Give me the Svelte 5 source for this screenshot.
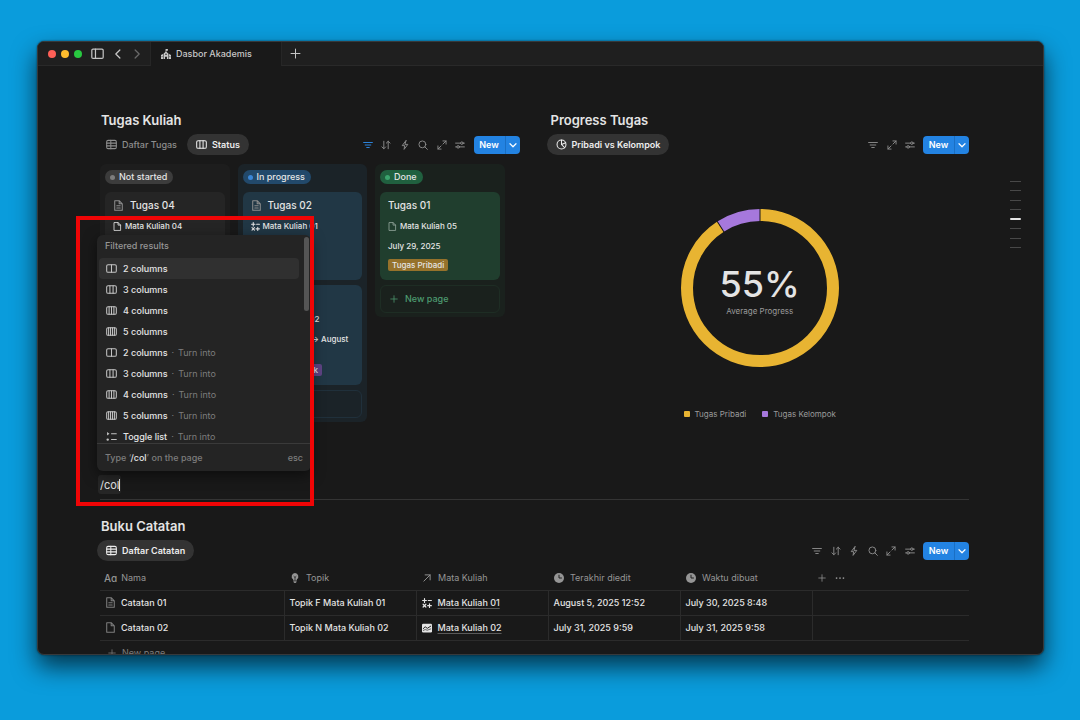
<script lang="ts">
  type Card = {
    title: string;
    icon?: boolean;
    course: string;
    courseIcon: string;
    date?: string;
    tag?: string;
    tagColor?: string;
  };

  const columns: { name: string; tone: string; cards: Card[] }[] = [
    {
      name: 'Not started',
      tone: 'gray',
      cards: [{ title: 'Tugas 04', icon: true, course: 'Mata Kuliah 04', courseIcon: 'page' }],
    },
    {
      name: 'In progress',
      tone: 'blue',
      cards: [
        {
          title: 'Tugas 02',
          icon: true,
          course: 'Mata Kuliah 01',
          courseIcon: 'math',
          date: 'August 5, 2025',
          tag: 'Tugas Pribadi',
          tagColor: 'yellow',
        },
        {
          title: 'Tugas 03',
          icon: true,
          course: 'Mata Kuliah 02',
          courseIcon: 'chart',
          date: 'August 5, 2025 → August 10,\u00a02025',
          tag: 'Tugas Kelompok',
          tagColor: 'purple',
        },
      ],
    },
    {
      name: 'Done',
      tone: 'green',
      cards: [
        {
          title: 'Tugas 01',
          course: 'Mata Kuliah 05',
          courseIcon: 'page',
          date: 'July 29, 2025',
          tag: 'Tugas Pribadi',
          tagColor: 'yellow',
        },
      ],
    },
  ];

  const menu = [
    { label: '2 columns', icon: 'cols2' },
    { label: '3 columns', icon: 'cols3' },
    { label: '4 columns', icon: 'cols4' },
    { label: '5 columns', icon: 'cols5' },
    { label: '2 columns', icon: 'cols2', hint: 'Turn into' },
    { label: '3 columns', icon: 'cols3', hint: 'Turn into' },
    { label: '4 columns', icon: 'cols4', hint: 'Turn into' },
    { label: '5 columns', icon: 'cols5', hint: 'Turn into' },
    { label: 'Toggle list', icon: 'toggle', hint: 'Turn into' },
  ];

  const notes = [
    {
      name: 'Catatan 01',
      icon: 'doc',
      topic: 'Topik F Mata Kuliah 01',
      course: 'Mata Kuliah 01',
      courseIcon: 'math',
      edited: 'August 5, 2025 12:52',
      created: 'July 30, 2025 8:48',
    },
    {
      name: 'Catatan 02',
      icon: 'page',
      topic: 'Topik N Mata Kuliah 02',
      course: 'Mata Kuliah 02',
      courseIcon: 'chart',
      edited: 'July 31, 2025 9:59',
      created: 'July 31, 2025 9:58',
    },
  ];

  const fullTools = ['filter', 'sort', 'bolt', 'search', 'expand', 'sliders'];
  const chartTools = ['filter', 'expand', 'sliders'];

  let query = $state('/col');
  let selected = $state(0);
</script>

{#snippet icon(name: string, size: number = 10)}
  <svg
    class="icon"
    width={size}
    height={size}
    viewBox="0 0 16 16"
    fill="none"
    stroke="currentColor"
    stroke-width="1.5"
    stroke-linecap="round"
    stroke-linejoin="round"
    aria-hidden="true"
  >
    {#if name === 'filter'}
      <path d="M1 4h14M3.500 8h9M6 12h4" />
    {:else if name === 'sort'}
      <path d="M4.500 2v12M1.500 11l3 3 3-3M11.500 14V2M8.500 5l3-3 3 3" />
    {:else if name === 'bolt'}
      <path d="M9.500 1 3.500 9h4L6.500 15l6-8h-4z" />
    {:else if name === 'search'}
      <circle cx="7" cy="7" r="5.500" /><path d="m11 11 4 4" />
    {:else if name === 'expand'}
      <path d="M9.500 1.500h5v5M14.500 1.500l-5 5M6.500 14.500h-5v-5M1.500 14.500l5-5" />
    {:else if name === 'sliders'}
      <path d="M1 5h8M13 5h2M1 11h2M7 11h8" /><circle cx="11" cy="5" r="2" /><circle cx="5" cy="11" r="2" />
    {:else if name === 'table'}
      <rect x="1" y="2" width="14" height="12" rx="2" /><path d="M1 6h14M1 10h14M7 2v12" />
    {:else if name === 'cols2'}
      <rect x="1" y="2.500" width="14" height="11" rx="2" /><path d="M8 2.500v11" />
    {:else if name === 'cols3'}
      <rect x="1" y="2.500" width="14" height="11" rx="2" /><path d="M5.700 2.500v11M10.300 2.500v11" />
    {:else if name === 'cols4'}
      <rect x="1" y="2.500" width="14" height="11" rx="2" /><path d="M4.500 2.500v11M8 2.500v11M11.500 2.500v11" />
    {:else if name === 'cols5'}
      <rect x="1" y="2.500" width="14" height="11" rx="2" />
      <path d="M3.800 2.500v11M6.600 2.500v11M9.400 2.500v11M12.200 2.500v11" />
    {:else if name === 'toggle'}
      <path d="M8 4h7M8 12.500h7" />
      <path d="M1.500 1.500v5L5 4z" fill="currentColor" stroke="none" />
      <circle cx="2.500" cy="12.500" r="1.700" fill="currentColor" stroke="none" />
    {:else if name === 'page'}
      <path d="M2.500 1h6.500l4.500 4.500V15h-11zM9 1v4.500h4.500" />
    {:else if name === 'doc'}
      <path d="M2.500 1h6.500l4.500 4.500V15h-11zM9 1v4.500h4.500M5.500 8.500h5M5.500 11.500h5" />
    {:else if name === 'math'}
      <path stroke-width="1.900" d="M1 4h6M4 1v6M10 4h5M1.800 10l4.400 4.400M6.200 10l-4.400 4.400M9 12.200h6M12 9.200v6" />
    {:else if name === 'chart'}
      <rect x="0" y="1" width="16" height="14" rx="2" fill="currentColor" stroke="none" />
      <path stroke="#191919" d="m2 9 3-3 3.500 2.500L14 5" />
      <path stroke="#191919" stroke-width="1" d="m2 12 3-1.500 3.500 1L14 9.500" />
    {:else if name === 'pie'}
      <circle cx="8" cy="8" r="6.500" /><path d="M8 1.500V8l4.500 4.500M8 8l6-2.500" />
    {:else if name === 'bulb'}
      <path
        d="M8 0a5.500 5.500 0 0 0-3 10v2h6v-2a5.500 5.500 0 0 0-3-10zM5.500 13h5v1.500L9 16H7l-1.500-1.500z"
        fill="currentColor"
        stroke="none"
      />
      <path stroke="#191919" stroke-width="1.200" d="M8 11V7M6.300 5.500 8 7l1.700-1.500" />
    {:else if name === 'arrow'}
      <path d="M3 13 13 3M5 3h8v8" />
    {:else if name === 'clock'}
      <circle cx="8" cy="8" r="8" fill="currentColor" stroke="none" /><path stroke="#191919" d="M8 3.500V8h4" />
    {:else if name === 'plus'}
      <path d="M8 1.500v13M1.500 8h13" />
    {:else if name === 'dots'}
      <g fill="currentColor" stroke="none">
        <circle cx="2.500" cy="8" r="1.400" /><circle cx="8" cy="8" r="1.400" /><circle cx="13.500" cy="8" r="1.400" />
      </g>
    {:else if name === 'down'}
      <path stroke-width="2.400" d="m2 5.500 6 6 6-6" />
    {:else if name === 'left'}
      <path stroke-width="2" d="M11 1.500 4.500 8l6.500 6.500" />
    {:else if name === 'right'}
      <path stroke-width="2" d="M5 1.500 11.500 8 5 14.500" />
    {:else if name === 'sidebar'}
      <rect x="1" y="2.500" width="14" height="11.500" rx="1.500" /><path d="M5.500 2.500v11.500" />
    {:else if name === 'school'}
      <g fill="currentColor" fill-rule="evenodd" stroke="none">
        <path d="M7.300 0H11v2.800H8.600v1.700L12 7.500V16H9.500v-3.500h-3V16H4V7.500l3.300-3zM8 7.200a1.200 1.200 0 1 0 0 2.400 1.200 1.200 0 0 0 0-2.400z" />
        <path d="M0 9.500 3.200 8v8H0zM1.200 11v2h1v-2zM16 9.500 12.800 8v8H16zM13.800 11v2h1v-2z" />
      </g>
    {/if}
  </svg>
{/snippet}

{#snippet toolbar(tools: string[], filtered: boolean = false)}
  <div class="toolbar">
    <div class="tools" class:short={tools.length < 4}>
      {#each tools as tool}
        <button class="tool" class:on={filtered && tool === 'filter'} aria-label={tool}>{@render icon(tool)}</button>
      {/each}
    </div>
    <div class="new">
      <button class="new-main">New</button>
      <button class="new-more" aria-label="More templates">{@render icon('down', 8)}</button>
    </div>
  </div>
{/snippet}

<div class="window">
  <header class="titlebar">
    <div class="controls">
      <div class="lights"><span class="red"></span><span class="amber"></span><span class="lime"></span></div>
      <button aria-label="Sidebar">{@render icon('sidebar', 13)}</button>
      <button aria-label="Back">{@render icon('left')}</button>
      <button class="dim" aria-label="Forward">{@render icon('right')}</button>
    </div>
    <div class="tab">{@render icon('school')}<span>Dasbor Akademis</span></div>
    <div class="tab-rest"><button aria-label="New tab">{@render icon('plus', 11)}</button></div>
  </header>

  <main class="page">
    <div class="split">
      <section>
        <h2>Tugas Kuliah</h2>
        <div class="bar">
          <div class="views">
            <button class="view">{@render icon('table', 11)}Daftar Tugas</button>
            <button class="view active">{@render icon('cols3', 11)}Status</button>
          </div>
          {@render toolbar(fullTools, true)}
        </div>
        <div class="board">
          {#each columns as column}
            <div class="column {column.tone}">
              <div class="status"><i></i>{column.name}</div>
              {#each column.cards as card}
                <article class="card">
                  <h3>
                    {#if card.icon}{@render icon('doc', 11)}{/if}{card.title}
                  </h3>
                  <p class="course">{@render icon(card.courseIcon, 9)}{card.course}</p>
                  {#if card.date}<p>{card.date}</p>{/if}
                  {#if card.tag}<span class="tag {card.tagColor}">{card.tag}</span>{/if}
                </article>
              {/each}
              <button class="add-card">{@render icon('plus', 8)}New page</button>
            </div>
          {/each}
        </div>
      </section>

      <section>
        <h2>Progress Tugas</h2>
        <div class="bar">
          <div class="views">
            <button class="view active">{@render icon('pie', 11)}Pribadi vs Kelompok</button>
          </div>
          {@render toolbar(chartTools)}
        </div>
        <div class="chart">
          <div class="donut">
            <svg viewBox="0 0 160 160" aria-hidden="true">
              <g fill="none" stroke-width="12" transform="rotate(-90 80 80)">
                <circle cx="80" cy="80" r="73" stroke="#e8b432" pathLength="110" stroke-dasharray="100 10" />
                <circle
                  cx="80"
                  cy="80"
                  r="73"
                  stroke="#a678dc"
                  pathLength="110"
                  stroke-dasharray="10 100"
                  stroke-dashoffset="-100"
                />
              </g>
              <g stroke="#191919" stroke-width="1">
                <path d="M80 0v14" />
                <path d="M80 0v14" transform="rotate(-32.700 80 80)" />
              </g>
            </svg>
            <div class="figure"><strong>55%</strong><span>Average Progress</span></div>
          </div>
          <ul class="legend">
            <li><i class="gold"></i>Tugas Pribadi</li>
            <li><i class="violet"></i>Tugas Kelompok</li>
          </ul>
        </div>
      </section>
    </div>

    <div class="editor">
      <label class="command">
        <input type="text" aria-label="Command" bind:value={query} /><span class="caret"></span>
      </label>
      <div class="popup">
        <div class="results">
          <div class="group">Filtered results</div>
          {#each menu as item, i}
            <button class="item" class:selected={i === selected} onclick={() => (selected = i)}>
              {@render icon(item.icon, 11)}<span>{item.label}</span>
              {#if item.hint}<small>·</small><small>{item.hint}</small>{/if}
            </button>
          {/each}
          <span class="thumb"></span>
        </div>
        <footer><span>Type ‘<b>/col</b>’ on the page</span><kbd>esc</kbd></footer>
      </div>
      <div class="highlight"></div>
    </div>
    <hr />

    <section class="notes">
      <h2>Buku Catatan</h2>
      <div class="bar">
        <div class="views">
          <button class="view active">{@render icon('table', 11)}Daftar Catatan</button>
        </div>
        {@render toolbar(fullTools)}
      </div>
      <table>
        <thead>
          <tr>
            <th class="name"><div><span class="aa">Aɑ</span>Nama</div></th>
            <th><div>{@render icon('bulb')}Topik</div></th>
            <th><div>{@render icon('arrow')}Mata Kuliah</div></th>
            <th><div>{@render icon('clock')}Terakhir diedit</div></th>
            <th><div>{@render icon('clock')}Waktu dibuat</div></th>
            <th class="extra"><div>{@render icon('plus', 8)}{@render icon('dots')}</div></th>
          </tr>
        </thead>
        <tbody>
          {#each notes as note}
            <tr>
              <td class="title"><div>{@render icon(note.icon, 11)}{note.name}</div></td>
              <td>{note.topic}</td>
              <td><div>{@render icon(note.courseIcon)}<a href="#course">{note.course}</a></div></td>
              <td>{note.edited}</td>
              <td>{note.created}</td>
              <td></td>
            </tr>
          {/each}
        </tbody>
      </table>
      <button class="add-row">{@render icon('plus', 8)}New page</button>
    </section>
  </main>

  <nav class="outline" aria-label="Outline">
    {#each Array(8) as _, i}
      <span class:current={i === 4}></span>
    {/each}
  </nav>
</div>

<style>
  :global(body) {
    background: #0a9cdc;
    overflow: hidden;
  }

  .window {
    position: relative;
    box-sizing: border-box;
    height: calc(100vh - 106px);
    margin: 41px 36px 65px 37px;
    overflow: hidden;
    border: 1px solid #36393b;
    border-radius: 7px;
    background: #191919;
    box-shadow:
      0 0 2px rgba(0, 0, 0, 0.6),
      0 12px 24px rgba(0, 0, 0, 0.65);
    color: #e4e4e4;
    font-family: Inter, 'Liberation Sans', sans-serif;
    font-size: 9px;
    font-weight: 500;
    line-height: 12px;
  }

  button,
  input {
    margin: 0;
    padding: 0;
    border: none;
    background: none;
    color: inherit;
    font: inherit;
  }

  button {
    display: flex;
    align-items: center;
    cursor: pointer;
    white-space: nowrap;
  }

  h2,
  h3,
  p,
  ul {
    margin: 0;
    padding: 0;
  }

  .icon {
    display: block;
    flex: none;
  }

  /* Title bar */
  .titlebar {
    display: flex;
    height: 24px;
  }

  .controls,
  .tab-rest {
    box-sizing: border-box;
    display: flex;
    align-items: center;
    border-bottom: 1px solid #292929;
    background: #1f1f1f;
    color: #c4c4c4;
  }

  .controls {
    width: 113px;
    gap: 9px;
    padding-left: 10px;
    border-right: 1px solid #262626;
  }

  .lights {
    display: flex;
    gap: 5px;
  }

  .lights span {
    width: 8px;
    height: 8px;
    border-radius: 50%;
  }

  .red {
    background: #fe5f57;
  }

  .amber {
    background: #febc2e;
  }

  .lime {
    background: #28c840;
  }

  .dim {
    color: #686868;
  }

  .tab {
    display: flex;
    align-items: center;
    gap: 5px;
    width: 120px;
    padding-left: 10px;
    color: #c8c8c8;
  }

  .tab-rest {
    flex: 1;
    padding-left: 8px;
    border-left: 1px solid #262626;
  }

  /* Page */
  .page {
    padding: 46px 74px 0 59px;
  }

  .split {
    display: grid;
    grid-template-columns: 1fr 1fr;
    gap: 27px;
  }

  h2 {
    padding-left: 4px;
    font-size: 13px;
    font-weight: 600;
    line-height: 16px;
  }

  .bar {
    display: flex;
    align-items: center;
    justify-content: space-between;
    height: 21px;
    margin-top: 6px;
  }

  .views {
    display: flex;
    gap: 1px;
  }

  .view {
    gap: 5px;
    height: 21px;
    padding: 0 9px;
    border-radius: 11px;
    color: #8d8d8d;
  }

  .view.active {
    background: #333;
    color: #ededed;
    font-weight: 600;
  }

  .toolbar {
    display: flex;
    align-items: center;
    gap: 8px;
    color: #8d8d8d;
  }

  .tools {
    display: flex;
    justify-content: space-between;
    width: 103px;
  }

  .tools.short {
    width: 47px;
  }

  .tool.on {
    color: #2e8ae6;
  }

  .new {
    display: flex;
    height: 18px;
    overflow: hidden;
    border-radius: 4px;
    background: #2383e2;
    color: #fff;
    font-weight: 600;
  }

  .new-main {
    width: 31px;
    justify-content: center;
  }

  .new-more {
    width: 15px;
    justify-content: center;
    border-left: 1px solid #1a6fc4;
  }

  /* Board */
  .board {
    display: flex;
    align-items: flex-start;
    gap: 8px;
    margin: 9px 15px 0 3px;
  }

  .column {
    box-sizing: border-box;
    flex: 1;
    min-width: 0;
    padding: 6px 5px 4px;
    border-radius: 6px;
    background: #1d1d1d;
  }

  .status {
    display: flex;
    align-items: center;
    gap: 4px;
    width: max-content;
    height: 14px;
    margin-bottom: 8px;
    padding: 0 6px 0 5px;
    border-radius: 7px;
    background: #3c3c3c;
  }

  .status i {
    width: 5px;
    height: 5px;
    border-radius: 50%;
    background: #7d7d7d;
  }

  .card {
    margin-bottom: 5px;
    padding: 6px 8px 9px;
    border-radius: 6px;
    background: #252525;
    font-size: 8px;
  }

  .card h3 {
    display: flex;
    align-items: center;
    gap: 6px;
    font-size: 10px;
    font-weight: 500;
    line-height: 14px;
  }

  .card h3 .icon {
    color: #8d8d8d;
  }

  .card p {
    margin-top: 8px;
  }

  .course {
    display: flex;
    align-items: center;
    gap: 3px;
  }

  .tag {
    display: block;
    width: max-content;
    margin-top: 7px;
    padding: 0 4px;
    border-radius: 2px;
  }

  .tag.yellow {
    background: #96722b;
  }

  .tag.purple {
    background: #5e4384;
  }

  .add-card {
    box-sizing: border-box;
    width: 100%;
    height: 28px;
    gap: 7px;
    padding-left: 9px;
    border: 1px solid #282828;
    border-radius: 6px;
    color: #7d7d7d;
  }

  .blue {
    background: #1b2328;
  }

  .blue .status {
    background: #22496b;
  }

  .blue .status i {
    background: #3b86d6;
  }

  .blue .card {
    background: #213745;
  }

  .blue .add-card {
    border-color: #20303b;
    color: #447fae;
  }

  .green {
    background: #1a211d;
  }

  .green .status {
    background: #20603f;
  }

  .green .status i {
    background: #3ba36d;
  }

  .green .card {
    background: #203e2e;
  }

  .green .course .icon {
    color: #8fa398;
  }

  .green .add-card {
    border-color: #1e2d24;
    color: #4d9b70;
  }

  /* Chart */
  .chart {
    display: flex;
    flex-direction: column;
    align-items: center;
    margin-top: 53px;
    padding-left: 4px;
  }

  .donut {
    display: grid;
    width: 160px;
    height: 160px;
  }

  .donut > * {
    grid-area: 1 / 1;
  }

  .figure {
    display: flex;
    flex-direction: column;
    align-items: center;
    justify-content: center;
    padding-top: 4px;
    color: #9b9b9b;
    font-size: 8px;
    font-weight: 400;
  }

  .figure strong {
    color: #e4e4e4;
    font-size: 36px;
    font-weight: 500;
    line-height: 42px;
  }

  .legend {
    display: flex;
    gap: 16px;
    margin-top: 40px;
    color: #9b9b9b;
    font-size: 8px;
    font-weight: 400;
    list-style: none;
  }

  .legend li {
    display: flex;
    align-items: center;
    gap: 5px;
  }

  .legend i {
    width: 6px;
    height: 6px;
    border-radius: 1px;
  }

  .gold {
    background: #e8b432;
  }

  .violet {
    background: #a678dc;
  }

  /* Slash command */
  .editor {
    position: relative;
    margin-top: 53px;
  }

  .command {
    position: relative;
    display: flex;
    width: 23px;
    height: 19px;
    margin-left: 1px;
    border-radius: 3px;
    background: #262626;
  }

  .command input {
    width: 100%;
    padding-left: 2px;
    outline: none;
    font-size: 11px;
    font-weight: 400;
  }

  .caret {
    position: absolute;
    top: 4px;
    right: 1px;
    width: 1px;
    height: 12px;
    background: #e4e4e4;
  }

  .popup {
    position: absolute;
    bottom: 23px;
    left: 0;
    width: 214px;
    border-radius: 6px;
    background: #242424;
    box-shadow: 0 4px 14px rgba(0, 0, 0, 0.5);
  }

  .results {
    position: relative;
    height: 208px;
    padding: 0 2px;
    overflow: hidden;
  }

  .group {
    padding: 5px 6px 6px;
    color: #969696;
  }

  .item {
    width: 200px;
    height: 21px;
    gap: 6px;
    padding-left: 7px;
    border-radius: 4px;
  }

  .item.selected {
    background: #303030;
  }

  .item .icon {
    color: #c4c4c4;
  }

  small {
    margin-left: -2px;
    color: #7d7d7d;
    font-size: 9px;
    font-weight: 400;
  }

  .thumb {
    position: absolute;
    top: 2px;
    right: 2px;
    width: 5px;
    height: 74px;
    border-radius: 3px;
    background: #555;
  }

  .popup footer {
    display: flex;
    align-items: center;
    justify-content: space-between;
    height: 27px;
    padding: 0 8px;
    border-top: 1px solid #3a3a3a;
    color: #7d7d7d;
  }

  .popup footer b {
    color: #e4e4e4;
    font-weight: 500;
  }

  .popup kbd {
    font-family: inherit;
  }

  .highlight {
    position: absolute;
    top: -259px;
    left: -21px;
    box-sizing: border-box;
    width: 238px;
    height: 290px;
    border: 4px solid #f00506;
    pointer-events: none;
  }

  hr {
    height: 1px;
    margin: 5px 0 0 3px;
    border: none;
    background: #343434;
  }

  /* Notes */
  .notes {
    padding-top: 18px;
  }

  table {
    width: calc(100% - 3px);
    margin: 6px 0 0 3px;
    border-collapse: collapse;
    table-layout: fixed;
  }

  th,
  td {
    box-sizing: border-box;
    padding: 0 5px;
    border-bottom: 1px solid #2b2b2b;
    text-align: left;
    white-space: nowrap;
  }

  th {
    width: 132px;
    height: 23px;
    padding-left: 6px;
    color: #959595;
    font-weight: 400;
  }

  th.name {
    width: 184px;
    padding-left: 4px;
  }

  th.extra {
    width: auto;
  }

  td {
    height: 25px;
  }

  td + td {
    border-left: 1px solid #2b2b2b;
  }

  th div,
  td div {
    display: flex;
    align-items: center;
    gap: 6px;
  }

  th.name div {
    gap: 4px;
  }

  td.title div {
    gap: 5px;
  }

  th.extra div {
    gap: 9px;
  }

  .aa {
    font-size: 10px;
    font-weight: 500;
  }

  td.title .icon {
    color: #7d7d7d;
  }

  td a {
    color: inherit;
    text-decoration: underline 1px #5a5a5a;
    text-underline-offset: 2px;
  }

  .add-row {
    height: 25px;
    gap: 6px;
    padding-left: 11px;
    color: #7d7d7d;
    font-weight: 400;
  }

  /* Outline */
  .outline {
    position: absolute;
    top: 139px;
    right: 22px;
    display: flex;
    flex-direction: column;
    justify-content: space-between;
    width: 11px;
    height: 67px;
  }

  .outline span {
    height: 1px;
    background: #484848;
  }

  .outline .current {
    height: 2px;
    border-radius: 1px;
    background: #e4e4e4;
  }
</style>
